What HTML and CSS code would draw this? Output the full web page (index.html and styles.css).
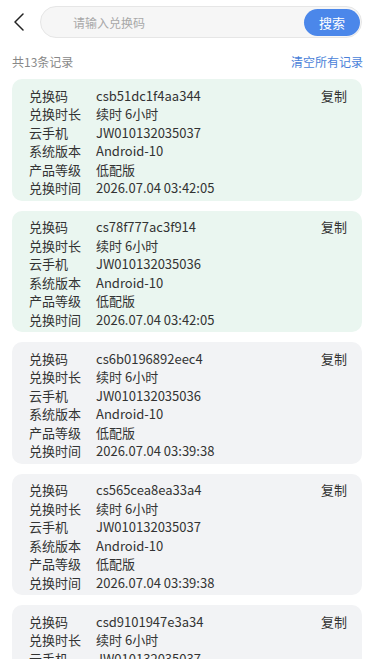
FILE: index.html
```html
<!DOCTYPE html>
<html lang="zh">
<head>
<meta charset="utf-8">
<link rel="stylesheet" href="styles.css">
</head>
<body>
<div class="page">
  <div class="topbar">
    <div class="back">
      <svg width="12" height="18" viewBox="0 0 12 18"><path d="M10 1 L2 9 L10 17" fill="none" stroke="#222" stroke-width="1.5" stroke-linecap="round" stroke-linejoin="round"/></svg>
    </div>
    <div class="search">
      <span class="placeholder">请输入兑换码</span>
      <span class="btn">搜索</span>
    </div>
  </div>
  <div class="summary">
    <span class="count">共13条记录</span>
    <span class="clear">清空所有记录</span>
  </div>
  <div class="list">
    <div class="card green">
      <div class="row"><span class="k">兑换码</span><span class="v">csb51dc1f4aa344</span><span class="copy">复制</span></div>
      <div class="row"><span class="k">兑换时长</span><span class="v">续时 6小时</span></div>
      <div class="row"><span class="k">云手机</span><span class="v">JW010132035037</span></div>
      <div class="row"><span class="k">系统版本</span><span class="v">Android-10</span></div>
      <div class="row"><span class="k">产品等级</span><span class="v">低配版</span></div>
      <div class="row"><span class="k">兑换时间</span><span class="v">2026.07.04 03:42:05</span></div>
    </div>
    <div class="card green">
      <div class="row"><span class="k">兑换码</span><span class="v">cs78f777ac3f914</span><span class="copy">复制</span></div>
      <div class="row"><span class="k">兑换时长</span><span class="v">续时 6小时</span></div>
      <div class="row"><span class="k">云手机</span><span class="v">JW010132035036</span></div>
      <div class="row"><span class="k">系统版本</span><span class="v">Android-10</span></div>
      <div class="row"><span class="k">产品等级</span><span class="v">低配版</span></div>
      <div class="row"><span class="k">兑换时间</span><span class="v">2026.07.04 03:42:05</span></div>
    </div>
    <div class="card gray">
      <div class="row"><span class="k">兑换码</span><span class="v">cs6b0196892eec4</span><span class="copy">复制</span></div>
      <div class="row"><span class="k">兑换时长</span><span class="v">续时 6小时</span></div>
      <div class="row"><span class="k">云手机</span><span class="v">JW010132035036</span></div>
      <div class="row"><span class="k">系统版本</span><span class="v">Android-10</span></div>
      <div class="row"><span class="k">产品等级</span><span class="v">低配版</span></div>
      <div class="row"><span class="k">兑换时间</span><span class="v">2026.07.04 03:39:38</span></div>
    </div>
    <div class="card gray">
      <div class="row"><span class="k">兑换码</span><span class="v">cs565cea8ea33a4</span><span class="copy">复制</span></div>
      <div class="row"><span class="k">兑换时长</span><span class="v">续时 6小时</span></div>
      <div class="row"><span class="k">云手机</span><span class="v">JW010132035037</span></div>
      <div class="row"><span class="k">系统版本</span><span class="v">Android-10</span></div>
      <div class="row"><span class="k">产品等级</span><span class="v">低配版</span></div>
      <div class="row"><span class="k">兑换时间</span><span class="v">2026.07.04 03:39:38</span></div>
    </div>
    <div class="card gray">
      <div class="row"><span class="k">兑换码</span><span class="v">csd9101947e3a34</span><span class="copy">复制</span></div>
      <div class="row"><span class="k">兑换时长</span><span class="v">续时 6小时</span></div>
      <div class="row"><span class="k">云手机</span><span class="v">JW010132035037</span></div>
      <div class="row"><span class="k">系统版本</span><span class="v">Android-10</span></div>
      <div class="row"><span class="k">产品等级</span><span class="v">低配版</span></div>
      <div class="row"><span class="k">兑换时间</span><span class="v">2026.07.04 03:39:38</span></div>
    </div>
  </div>
</div>
</body>
</html>
```

FILE: styles.css
```css
* { box-sizing: border-box; }
html, body { margin: 0; padding: 0; background: #fff; }
body {
  font-family: "Noto Sans CJK SC", "Noto Sans", sans-serif;
  color: #333;
  width: 374px;
  height: 666px;
  overflow: hidden;
}
.page { padding: 0 12px 0 12px; }
.topbar {
  display: flex;
  align-items: center;
  height: 44px;
}
.back {
  width: 28px;
  display: flex;
  align-items: center;
  padding-left: 1px;
}
.search {
  flex: 1;
  height: 32px;
  border: 1px solid #e6e6e6;
  background: #f6f6f6;
  border-radius: 16px;
  display: flex;
  align-items: center;
  justify-content: space-between;
  padding: 0 1px 0 32px;
}
.placeholder { font-size: 12px; color: #a8a8a8; }
.btn {
  background: #4b87ea;
  color: #fff;
  font-size: 13px;
  height: 27px;
  width: 56px;
  border-radius: 14px;
  display: flex;
  align-items: center;
  justify-content: center;
}
.summary {
  display: flex;
  justify-content: space-between;
  align-items: center;
  height: 35px;
  font-size: 12px;
  margin-right: -1px;
}
.count { color: #888; }
.clear { color: #4a7fd9; }
.list {
  display: flex;
  flex-direction: column;
  gap: 10px;
  height: 580px;
  overflow: hidden;
}
.card {
  flex: none;
  border-radius: 10px;
  padding: 7.5px 15px 3px 17px;
  font-size: 13px;
}
.green { background: #eaf6f0; }
.gray { background: #f2f3f5; }
.row {
  display: flex;
  line-height: 18.5px;
  height: 18.5px;
}
.k { width: 67px; flex: none; }
.v { flex: 1; }
.copy { flex: none; }
```
